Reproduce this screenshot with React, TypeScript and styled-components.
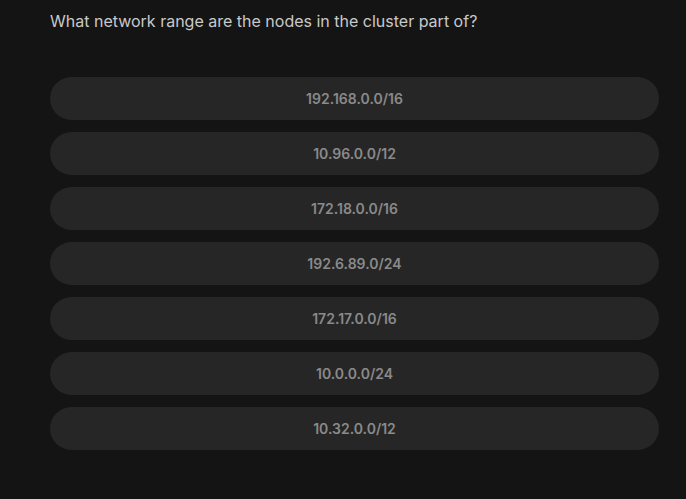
import React from "react";
import styled, { createGlobalStyle } from "styled-components";

const Global = createGlobalStyle`
  html, body { margin: 0; padding: 0; background: #141414; }
  body { font-family: Inter, "Noto Sans", sans-serif; }
`;

const Page = styled.div`
  box-sizing: border-box;
  width: 686px;
  height: 499px;
  padding: 9px 27px 0 50px;
  background: #141414;
  display: flex;
  flex-direction: column;
`;

const Question = styled.div`
  font-size: 16px;
  line-height: 24px;
  color: #c9c9c9;
  margin-bottom: 44px;
`;

const Options = styled.div`
  display: flex;
  flex-direction: column;
  gap: 12px;
`;

const Option = styled.button`
  height: 43px;
  border: none;
  border-radius: 22px;
  background: #262626;
  color: #8a8a8a;
  font-family: Inter, "Noto Sans", sans-serif;
  font-size: 14px;
  font-weight: 600;
  display: flex;
  align-items: center;
  justify-content: center;
  padding: 0;
  cursor: pointer;
`;

const options = [
  "192.168.0.0/16",
  "10.96.0.0/12",
  "172.18.0.0/16",
  "192.6.89.0/24",
  "172.17.0.0/16",
  "10.0.0.0/24",
  "10.32.0.0/12",
];

export default function App() {
  return (
    <>
      <Global />
      <Page>
        <Question>What network range are the nodes in the cluster part of?</Question>
        <Options>
          {options.map((o) => (
            <Option key={o}>{o}</Option>
          ))}
        </Options>
      </Page>
    </>
  );
}
